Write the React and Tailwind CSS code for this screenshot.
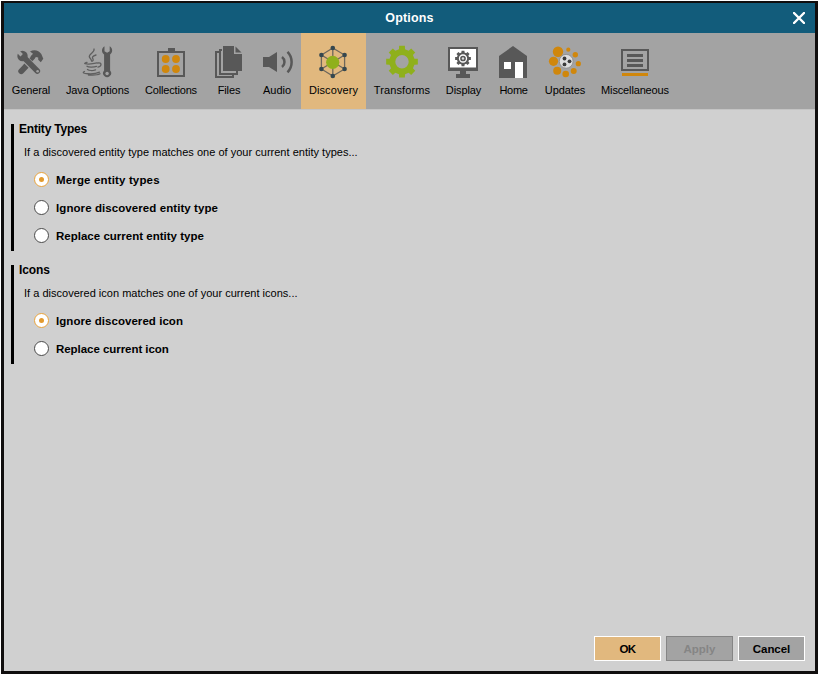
import React from "react";

const INK = "#585858";
const BAR = "#a3a3a3";
const ORANGE = "#d0870c";
const GREEN = "#8fb01c";

function gearPath(cx, cy, outer, inner, teeth, topHalf, baseHalf) {
  const pts = [];
  for (let i = 0; i < teeth; i++) {
    const a = (i * 2 * Math.PI) / teeth;
    [[inner, -baseHalf], [outer, -topHalf], [outer, topHalf], [inner, baseHalf]].forEach(([r, d]) => {
      pts.push(`${(cx + r * Math.sin(a + d)).toFixed(2)} ${(cy - r * Math.cos(a + d)).toFixed(2)}`);
    });
  }
  return `M${pts.join("L")}Z`;
}

const icons = {
  general: (
    <g>
      <path d="M30 51.500C34 49 39 50.300 41.300 54l2 4.800-2.500 3.400-2.600-2.400v-2.400l-2.200-.4-2.500 2.500-3-3 2.500-2.700z" fill={INK} />
      <path d="M33.500 57L25 65.800" stroke={INK} strokeWidth="4" />
      <path d="M26.200 66l-5 5.200" stroke={INK} strokeWidth="5.800" strokeLinecap="round" />
      <path d="M26 60L38 72" stroke={BAR} strokeWidth="7.400" />
      <circle cx="22.500" cy="56" r="5.200" fill={INK} />
      <path d="M23.500 57L37.300 71" stroke={INK} strokeWidth="5.600" strokeLinecap="round" />
      <path d="M17.300 50.800l4.400 4.400" stroke={BAR} strokeWidth="3.400" />
      <circle cx="37.600" cy="71.300" r="1.300" fill={BAR} />
    </g>
  ),
  java: (
    <g>
      <g fill="none" stroke="#5f5f5f" strokeWidth="1.300" strokeLinecap="round">
        <path d="M94 49c1.200 3.500-5.800 4.800-4.600 8 .4 1.300 1.900 2 2.200 4.200M96 55c-3.700 1-4.200 2.500-3 4 .5.800.2 1.500-.4 2" />
        <path d="M87 62.500c-7 1.500 3 2.300 10 .4M97.800 63c4.200-1 4.200 3.300.2 4.200M87 66.300c1 1 7 1 9.500.1M87.500 69.500c1.500 1.300 5.500 1.200 8 .3M84.500 71.500c-5.500 2.300 9 3.500 15 .7M88.500 75c4 .3 9.500 0 11.500-1.200" />
      </g>
      <path d="M104.500 46.300c-3 1.700-3.500 5.900-.4 8.200v16a4 4 0 1 0 6 0v-16c3.100-2.300 2.600-6.500-.4-8.200v4.900l-2.600 1.500-2.600-1.500z" fill={INK} />
      <circle cx="107.100" cy="73.500" r="1.700" fill={BAR} />
    </g>
  ),
  collections: (
    <g>
      <path d="M168 48h7v3h-7z" fill={INK} />
      <rect x="158" y="52" width="26" height="24" fill="none" stroke={INK} strokeWidth="2" />
      <g fill={ORANGE}>
        <circle cx="165.700" cy="59" r="3.900" />
        <circle cx="176" cy="59" r="3.900" />
        <circle cx="165.700" cy="69" r="3.900" />
        <circle cx="176" cy="69" r="3.900" />
      </g>
    </g>
  ),
  files: (
    <g>
      <path d="M222 50h-2v24h17v-3M219 52h-3v25h17v-2" fill="none" stroke={INK} strokeWidth="2" />
      <path d="M223 46h11v8h8v17h-19z" fill={INK} />
      <path d="M235.500 46.500v6h6z" fill={INK} />
    </g>
  ),
  audio: (
    <g>
      <path d="M263 57h6l8-5v20l-8-5h-6z" fill={INK} />
      <path d="M282 57c3.300 2.500 3.300 7.500 0 10M287.500 51.800c5.500 5.500 5.500 15 0 20.500" fill="none" stroke={INK} strokeWidth="2.500" />
    </g>
  ),
  discovery: (
    <g>
      <path d="M332.800 48l11.800 7v14l-11.800 7-11.400-7V55zV76M321.400 55l23.200 14M344.600 55l-23.200 14" fill="none" stroke="#6e675b" strokeWidth="1.300" />
      <g fill="#35474f">
        <circle cx="332.800" cy="48" r="2.300" />
        <circle cx="344.600" cy="55" r="2.300" />
        <circle cx="344.600" cy="69" r="2.300" />
        <circle cx="332.800" cy="76" r="2.300" />
        <circle cx="321.400" cy="69" r="2.300" />
        <circle cx="321.400" cy="55" r="2.300" />
      </g>
      <circle cx="332.700" cy="62.300" r="6.600" fill={GREEN} />
    </g>
  ),
  transforms: (
    <path
      fill={GREEN}
      fillRule="evenodd"
      d={gearPath(402, 61.7, 16.1, 12.8, 8, 0.18, 0.24) + "M395.300 61.700a6.700 6.700 0 1 0 13.400 0a6.700 6.700 0 1 0-13.400 0Z"}
    />
  ),
  display: (
    <g>
      <path d="M448 47h30v24h-30z" fill={INK} />
      <path d="M450 49h26v18.500h-26z" fill="#fff" />
      <path d="M460 71h6v3h4v4h-14v-4h4z" fill={INK} />
      <path d={gearPath(463, 58.5, 8, 6.2, 8, 0.18, 0.26)} fill={INK} />
      <circle cx="463" cy="58.500" r="3.500" fill="none" stroke="#fff" strokeWidth="1.300" />
      <circle cx="463" cy="58.500" r="1.200" fill="#ddd" />
    </g>
  ),
  home: (
    <g>
      <path d="M499 56l14-10 14 10v22h-28z" fill={INK} />
      <path d="M504 62h7v7h-7zM515 62h8v16h-8z" fill="#fff" />
    </g>
  ),
  updates: (
    <g>
      <g fill={ORANGE}>
        <circle cx="558" cy="51.700" r="5.200" />
        <circle cx="568.300" cy="49.700" r="2.100" />
        <circle cx="575.300" cy="54.700" r="2.700" />
        <circle cx="578.300" cy="63.700" r="2.600" />
        <circle cx="573.700" cy="71" r="3" />
        <circle cx="565.700" cy="74" r="3.300" />
        <circle cx="557.200" cy="70.700" r="4" />
        <circle cx="553.500" cy="61.300" r="4.600" />
      </g>
      <circle cx="566.200" cy="61.300" r="6.900" fill="#dedede" stroke="#888" strokeWidth=".8" />
      <g fill="#3b3b3b">
        <circle cx="564.500" cy="58.500" r="1.900" />
        <circle cx="569.500" cy="61.300" r="1.900" />
        <circle cx="564.500" cy="64.400" r="1.900" />
      </g>
    </g>
  ),
  misc: (
    <g>
      <rect x="622" y="50" width="26" height="20" fill="none" stroke={INK} strokeWidth="2" />
      <path d="M627 54h16v3h-16zM627 59h16v3h-16zM627 64h16v3h-16z" fill={INK} />
      <path d="M622 73h26v3h-26z" fill={ORANGE} />
    </g>
  ),
};

const tabs = [
  { id: "general", label: "General", box: "4 46 54 32", size: "w-[54px]", track: "tracking-[-0.1px]" },
  { id: "java", label: "Java Options", box: "58 46 79 32", size: "w-[79px]", track: "tracking-[-0.08px]" },
  { id: "collections", label: "Collections", box: "137 46 68 32", size: "w-[68px]", track: "tracking-[-0.18px]" },
  { id: "files", label: "Files", box: "205 46 48 32", size: "w-[48px]", track: "tracking-[-0.1px]" },
  { id: "audio", label: "Audio", box: "253 46 48 32", size: "w-[48px]", track: "tracking-normal" },
  { id: "discovery", label: "Discovery", box: "301 46 65 32", size: "w-[65px]", track: "tracking-[0.1px]", active: true },
  { id: "transforms", label: "Transforms", box: "366 46 72 32", size: "w-[72px]", track: "tracking-[0.12px]" },
  { id: "display", label: "Display", box: "438 46 51 32", size: "w-[51px]", track: "tracking-[-0.1px]" },
  { id: "home", label: "Home", box: "489 46 49 32", size: "w-[49px]", track: "tracking-[-0.3px]" },
  { id: "updates", label: "Updates", box: "538 46 54 32", size: "w-[54px]", track: "tracking-[-0.1px]" },
  { id: "misc", label: "Miscellaneous", box: "592 46 86 32", size: "w-[86px]", track: "tracking-[-0.15px]" },
];

function Tab({ id, label, box, size, track, active }) {
  return (
    <button className={`flex h-full shrink-0 flex-col items-center pt-[13px] ${size} ${active ? "bg-[#e1b87e]" : ""}`}>
      <svg viewBox={box} className={`h-8 overflow-visible ${size}`}>{icons[id]}</svg>
      <span className={`mt-[5px] whitespace-nowrap text-[11px] leading-[14px] ${track}`}>{label}</span>
    </button>
  );
}

function Radio({ label, track, checked }) {
  return (
    <label className="flex h-7 items-center gap-[7px]">
      <span
        className={`-mt-px flex size-[15px] items-center justify-center rounded-full border bg-white ${
          checked ? "border-[#e8a33c]" : "border-[#4a4a4a]"
        }`}
      >
        {checked && <span className="size-[5px] rounded-full bg-[#e39a2d]" />}
      </span>
      <span className={`text-[11.5px] font-bold leading-[14px] whitespace-nowrap ${track}`}>{label}</span>
    </label>
  );
}

function Section({ title, hint, options, size, track }) {
  return (
    <section className={`border-l-3 border-black pl-[5px] ${size}`}>
      <h2 className={`text-[12px] font-bold leading-[10px] ${track}`}>{title}</h2>
      <p className="mt-[11px] pl-[5px] text-[11px] leading-[14px] tracking-[0.015px]">{hint}</p>
      <div className="mt-[7px] pl-[15px]">
        {options.map((o, i) => (
          <Radio key={o.label} {...o} checked={i === 0} />
        ))}
      </div>
    </section>
  );
}

export default function App() {
  return (
    <div className="h-[675px] w-[819px] overflow-hidden bg-white p-px font-['Liberation_Sans',Arial,sans-serif] text-black">
      <div className="flex h-[673px] w-[817px] flex-col border-x-3 border-t-2 border-b-3 border-[#100e0e] bg-[#d0d0d0]">
        <header className="grid h-[30px] shrink-0 grid-cols-[1fr_auto_1fr] items-center bg-[#125c7b] text-white">
          <span />
          <h1 className="text-[12.5px] font-bold tracking-[0.15px]">Options</h1>
          <svg viewBox="0 0 12 12" className="mr-[10px] size-3 justify-self-end">
            <path d="M1 1l10 10M11 1L1 11" stroke="#fff" strokeWidth="2.400" strokeLinecap="round" />
          </svg>
        </header>
        <nav className="flex h-[77px] shrink-0 border-b border-[#c4c4c4] bg-[#a3a3a3]">
          {tabs.map((t) => (
            <Tab key={t.id} {...t} />
          ))}
        </nav>
        <main className="flex grow flex-col gap-[14px] pt-[14px] pl-[7px]">
          <Section
            title="Entity Types"
            hint="If a discovered entity type matches one of your current entity types..."
            options={[
              { label: "Merge entity types", track: "tracking-[0.15px]" },
              { label: "Ignore discovered entity type", track: "tracking-[0.08px]" },
              { label: "Replace current entity type", track: "tracking-[0.01px]" },
            ]}
            size="h-[127px]"
            track="tracking-[-0.2px]"
          />
          <Section
            title="Icons"
            hint="If a discovered icon matches one of your current icons..."
            options={[
              { label: "Ignore discovered icon", track: "tracking-[0.05px]" },
              { label: "Replace current icon", track: "tracking-[-0.05px]" },
            ]}
            size="h-[99px]"
            track="tracking-[-0.1px]"
          />
        </main>
        <footer className="flex shrink-0 justify-end gap-[5px] pr-[10px] pb-[10px] text-[11.5px] font-bold">
          <button className="h-[25px] w-[67px] border border-white bg-[#e1b87e] pt-[3px] tracking-[-0.6px]">OK</button>
          <button className="h-[25px] w-[67px] border border-[#858585] bg-[#a3a3a3] pt-[3px] text-[#858585]">Apply</button>
          <button className="h-[25px] w-[67px] border border-white bg-[#a3a3a3] pt-[3px] tracking-[-0.05px]">Cancel</button>
        </footer>
      </div>
    </div>
  );
}
